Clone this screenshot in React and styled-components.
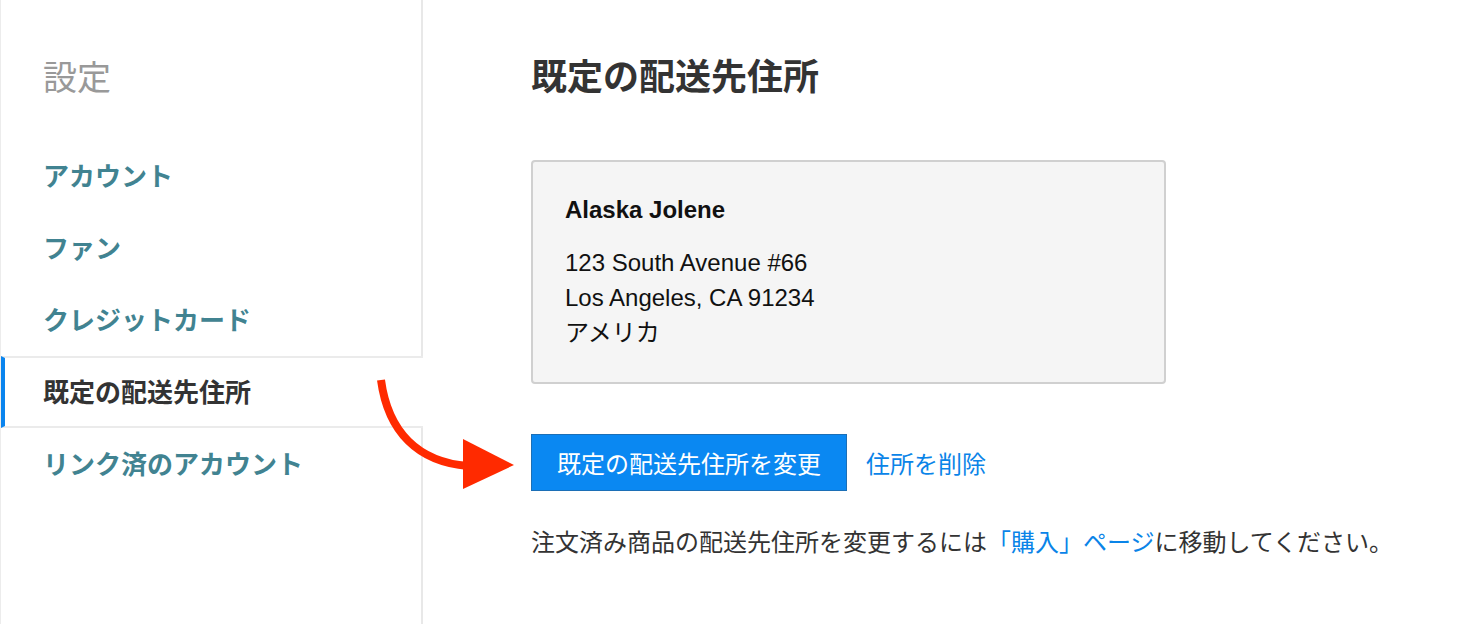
import React from 'react';
import styled, { createGlobalStyle } from 'styled-components';

const GlobalStyle = createGlobalStyle`
  html, body, #root {
    margin: 0;
    height: 100%;
  }
  body {
    font-family: "Liberation Sans", "Noto Sans CJK JP", sans-serif;
    color: #333;
    background: #fff;
  }
`;

const navItems = ['アカウント', 'ファン', 'クレジットカード', '既定の配送先住所', 'リンク済のアカウント'];

const App = () => {
  const active = '既定の配送先住所';

  return (
    <Page>
      <GlobalStyle />
      <Sidebar>
        <SideTitle>設定</SideTitle>
        <Nav>
          {navItems.map(item => (
            <NavItem key={item} $active={item === active}>{item}</NavItem>
          ))}
        </Nav>
      </Sidebar>

      <Main>
        <Heading>既定の配送先住所</Heading>
        <AddressCard>
          <Name>Alaska Jolene</Name>
          <AddressLine>123 South Avenue #66</AddressLine>
          <AddressLine>Los Angeles, CA 91234</AddressLine>
          <AddressLine>アメリカ</AddressLine>
        </AddressCard>

        <Actions>
          <PrimaryButton>既定の配送先住所を変更</PrimaryButton>
          <TextLink>住所を削除</TextLink>
        </Actions>

        <Note>
          注文済み商品の配送先住所を変更するには<TextLink as="span">「購入」ページ</TextLink>に移動してください。
        </Note>
      </Main>

      {/* annotation arrow pointing at the button */}
      <Arrow width="150" height="135" viewBox="0 0 150 135">
        <path d="M11 10 C 18 62, 48 92, 98 96" fill="none" stroke="#ff2a00" strokeWidth="8" />
        <polygon points="93,69 93,119 144,95" fill="#ff2a00" />
      </Arrow>
    </Page>
  );
};

const Page = styled.div`
  position: relative;
  display: flex;
  height: 100%;
  min-height: 624px;
`;

const Sidebar = styled.aside`
  width: 420px;
  flex-shrink: 0;
  border-left: 1px solid #ececec;
  border-right: 2px solid #e8e8e8;
  padding-top: 61px;
`;

const SideTitle = styled.h2`
  margin: 0 0 45px 42px;
  font-size: 34px;
  line-height: 34px;
  font-weight: 400;
  color: #999;
`;

const Nav = styled.nav`
  display: flex;
  flex-direction: column;
`;

const NavItem = styled.div`
  box-sizing: border-box;
  height: 72px;
  display: flex;
  align-items: center;
  padding-left: ${p => (p.$active ? '38px' : '42px')};
  padding-bottom: 4px;
  font-size: 26px;
  font-weight: 700;
  color: ${p => (p.$active ? '#333' : '#418391')};
  border-top: 2px solid ${p => (p.$active ? '#ebebeb' : 'transparent')};
  border-bottom: 2px solid ${p => (p.$active ? '#ebebeb' : 'transparent')};
  border-left: ${p => (p.$active ? '4px solid #0a84ee' : 'none')};
  margin-right: ${p => (p.$active ? '-2px' : '0')};
  background: #fff;
`;

const Main = styled.main`
  padding: 60px 0 0 108px;
`;

const Heading = styled.h1`
  margin: 0;
  font-size: 36px;
  line-height: 36px;
  font-weight: 700;
  color: #333;
`;

const AddressCard = styled.div`
  box-sizing: border-box;
  width: 635px;
  height: 224px;
  margin-top: 64px;
  padding: 33px 32px;
  background: #f5f5f5;
  border: 2px solid #d0d0d0;
  border-radius: 4px;
  color: #111;
`;

const Name = styled.div`
  font-size: 24px;
  line-height: 30px;
  font-weight: 700;
  margin-bottom: 20px;
`;

const AddressLine = styled.div`
  font-size: 24px;
  line-height: 35px;
`;

const Actions = styled.div`
  display: flex;
  align-items: center;
  gap: 19px;
  margin-top: 50px;
`;

const PrimaryButton = styled.button`
  box-sizing: border-box;
  height: 57px;
  padding: 0 25px;
  font-family: inherit;
  font-size: 24px;
  color: #fff;
  background: #0a88f2;
  border: 1px solid #1c6fb6;
  border-radius: 0;
  cursor: pointer;
`;

const TextLink = styled.a`
  font-size: 24px;
  color: #0a84e8;
  text-decoration: none;
  cursor: pointer;
`;

const Note = styled.p`
  margin: 34px 0 0;
  font-size: 24px;
  line-height: 36px;
  color: #333;
`;

const Arrow = styled.svg`
  position: absolute;
  left: 370px;
  top: 370px;
`;

export default App;
